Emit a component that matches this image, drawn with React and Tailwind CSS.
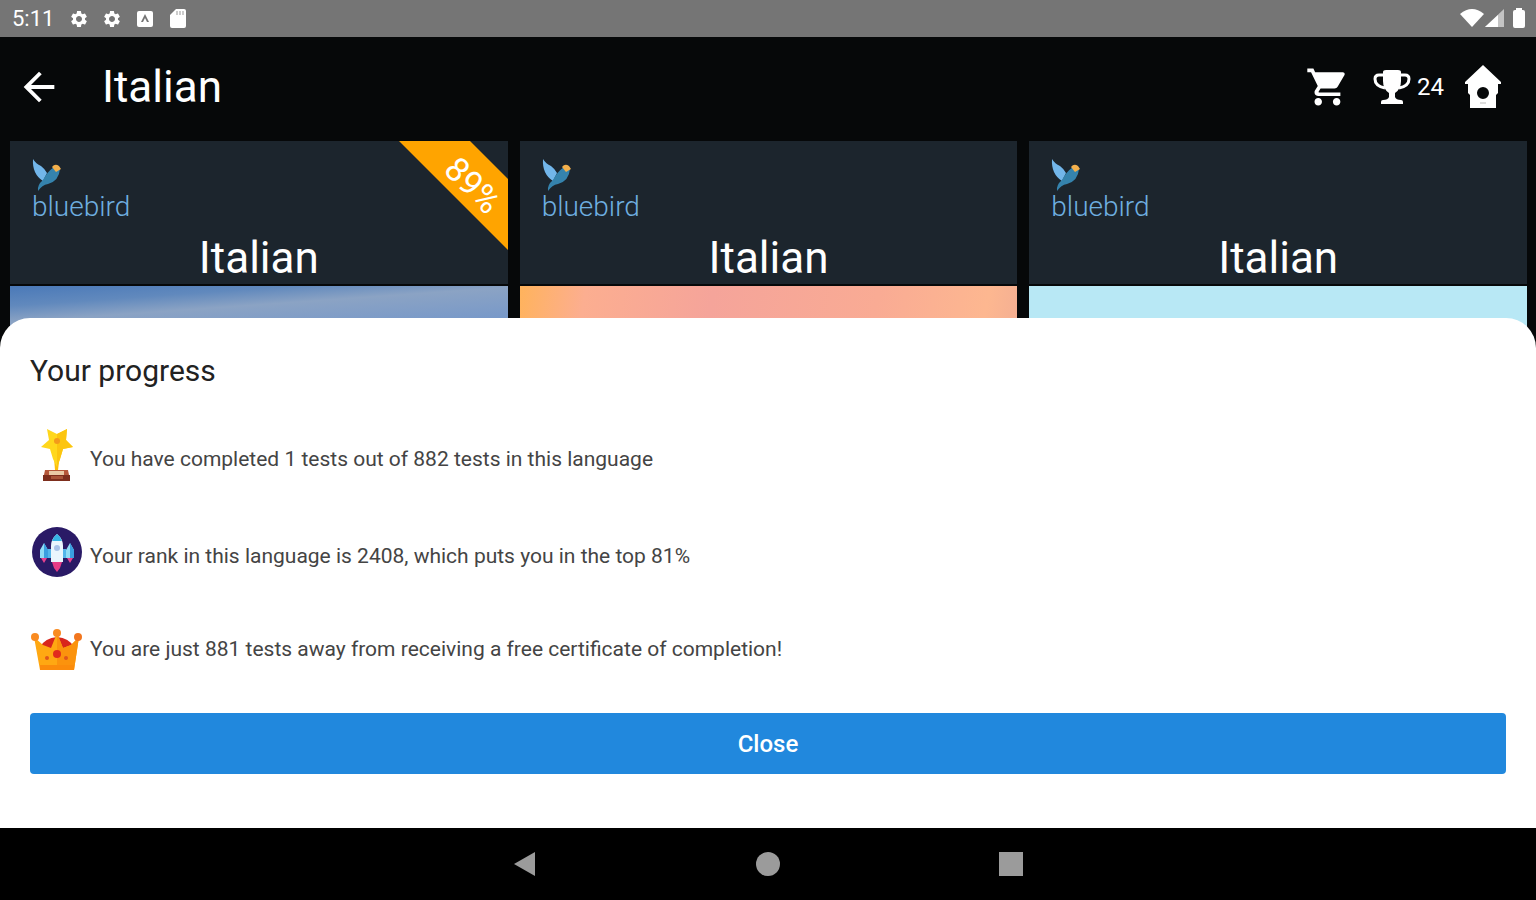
import { useState } from "react";
import { MdArrowBack, MdSettings } from "react-icons/md";
import { IoMdCart } from "react-icons/io";

const courses = [
  {
    id: "a1",
    title: "Italian",
    progress: "89%",
    cover: "bg-[linear-gradient(176deg,#4a79b8_0px,#6189bd_20px,#8ba3c4_36px,#6f94cb_80px)]",
  },
  {
    id: "a2",
    title: "Italian",
    cover: "bg-[linear-gradient(100deg,#ffb35c_0%,#fcae90_12%,#f5a49a_35%,#f9ab94_65%,#fdb790_85%,#e8a496_100%)]",
  },
  {
    id: "b1",
    title: "Italian",
    cover: "bg-[#b8e8f5]",
  },
];

const stats = [
  { icon: StarAward, text: "You have completed 1 tests out of 882 tests in this language" },
  { icon: RocketBadge, text: "Your rank in this language is 2408, which puts you in the top 81%" },
  { icon: Crown, text: "You are just 881 tests away from receiving a free certificate of completion!" },
];

function StarAward() {
  return (
    <svg viewBox="0 0 52 62" className="w-13 h-[62px] shrink-0" aria-hidden="true">
      <path d="M23 17h8l-3 24h-3z" fill="#fdbf0a" />
      <path d="M17 0l10 5L37 0l-1 11 7 7-10 2-3 10-3 8-4-8-3-10-9-2 8-7z" fill="#ffd71c" />
      <path d="M27 5L37 0l-1 11 7 7-10 2-3 10-3 8z" fill="#fcc50f" />
      <circle cx="27" cy="12" r="3" fill="#f39a1b" />
      <path d="M15 41h23l1 5H14z" fill="#b5573a" />
      <path d="M19 42h15v5H19z" fill="#e9c9a5" />
      <path d="M13 46h27v6H13z" fill="#7d2e1d" />
      <path d="M21 47h12v3H21z" fill="#a85338" />
    </svg>
  );
}

function RocketBadge() {
  return (
    <svg viewBox="0 0 52 62" className="w-13 h-[62px] shrink-0" aria-hidden="true">
      <circle cx="27" cy="26" r="25" fill="#2a1a66" />
      <path d="M10 24l4-7 4 7v8h-8zM36 24l4-7 4 7v8h-8z" fill="#8fdcf5" />
      <path d="M14 17l4 7v8h-4zM40 17l4 7v8h-4z" fill="#3a9fe0" />
      <path d="M11 32h6l-3 5zM37 32h6l-3 5z" fill="#e8418f" />
      <path d="M18 23h18v9H18z" fill="#53b6ea" />
      <path d="M21 20q0-7 6-12 6 5 6 12v16H21z" fill="#eaf6fd" />
      <path d="M22 15q1-4 5-7 4 3 5 7z" fill="#36b5e5" />
      <circle cx="27" cy="22" r="3" fill="#a9c3e8" />
      <path d="M22 36h10l-2 6-3 4-3-4z" fill="#e63b86" />
    </svg>
  );
}

function Crown() {
  return (
    <svg viewBox="0 0 52 53" className="w-13 h-[53px] shrink-0" aria-hidden="true">
      <path d="M10 24q5-9 17-10 12 1 17 10l-5 8H15z" fill="#d8261c" />
      <path d="M4 14l9 8 8 3 6-15 6 15 8-3 8-8-5 33H10z" fill="#ffa812" />
      <path d="M27 10l6 15 8-3 8-8-5 33H27z" fill="#fb930d" />
      <circle cx="5" cy="14" r="4" fill="#f98b21" />
      <circle cx="27" cy="10" r="4" fill="#f98b21" />
      <circle cx="48" cy="14" r="4" fill="#f2761e" />
      <path d="M10 42h34v5H10z" fill="#fb8b0b" />
      <circle cx="27" cy="31" r="4" fill="#e12c1d" />
      <circle cx="17" cy="35" r="2" fill="#e0561b" />
      <circle cx="36" cy="35" r="2" fill="#e0561b" />
    </svg>
  );
}

function BirdLogo() {
  return (
    <div className="w-fit">
      <svg viewBox="0 0 30 32" className="w-[30px] h-8" aria-hidden="true">
        <path d="M1 0q3 5 8 7 4 3 6 7l-4 8Q0 15 1 0z" fill="#72b6ea" />
        <path d="M28 10q-1 12-12 15-6 1-10 7-1-6 5-11 4-8 11-13z" fill="#3583ad" />
        <path d="M20 8q3-4 7-1l2 3-5 3z" fill="#f3b04c" />
      </svg>
      <p className="mt-[2px] text-[28px] leading-7 font-light text-[#6fafe0]">bluebird</p>
    </div>
  );
}

function Trophy() {
  return (
    <svg viewBox="0 0 38 36" className="w-[38px] h-9" aria-hidden="true">
      <path
        d="M10 6H6q-4 0-4 4 0 7 10 9M28 6h4q4 0 4 4 0 7-10 9"
        fill="none"
        stroke="#fff"
        strokeWidth="3"
      />
      <path
        d="M10 3q0-2 3-2h12q3 0 3 2v9q0 8-6 12v4q1 3 6 3 2 0 2 2v2H8v-2q0-2 2-2 5 0 6-3v-4q-6-4-6-12z"
        fill="#fff"
      />
    </svg>
  );
}

function Birdhouse() {
  return (
    <svg viewBox="0 0 38 44" className="w-[38px] h-11" aria-hidden="true">
      <path
        fillRule="evenodd"
        d="M19 0l18 17v2h-3v9l-2 2v13H6V30l-2-2v-9H1v-2zM19 22a6 6 0 1 0 0 12 6 6 0 0 0 0-12z"
        fill="#fff"
      />
      <path d="M16 38h6" stroke="#bbb" />
    </svg>
  );
}

function Ribbon({ label }) {
  return (
    <div className="absolute top-0 right-0 w-[109px] h-[109px] overflow-hidden">
      <svg viewBox="0 0 109 109" className="w-full h-full" aria-hidden="true">
        <path d="M0 0h71l38 38v71z" fill="#ffa400" />
      </svg>
      <span className="absolute top-6 right-0 w-[70px] text-center text-[34px] leading-10 text-white rotate-45">
        {label}
      </span>
    </div>
  );
}

function CourseCard({ course }) {
  return (
    <article className="relative">
      <div className="bg-[#1c252d] px-[22px] pt-[18px]">
        <BirdLogo />
        <h2 className="mt-[11px] text-[44px] leading-[52px] text-white text-center">{course.title}</h2>
      </div>
      <div className={`mt-[2px] h-80 ${course.cover}`} />
      {course.progress && <Ribbon label={course.progress} />}
    </article>
  );
}

function StatusBar() {
  return (
    <div className="flex items-center justify-between h-[37px] bg-[#757575] text-white pl-3 pr-[10px]">
      <div className="flex items-center gap-[13px]">
        <span className="text-[22px] mr-[2px]">5:11</span>
        <MdSettings size={20} />
        <MdSettings size={20} />
        <svg viewBox="0 0 20 20" className="w-5 h-5" aria-hidden="true">
          <path d="M4 2h12q2 0 2 2v12q0 2-2 2H4q-2 0-2-2V4q0-2 2-2z" fill="#fff" />
          <path d="M6 13l4-8 4 8h-2l-2-4-2 4z" fill="#757575" />
        </svg>
        <svg viewBox="0 0 20 20" className="w-5 h-5" aria-hidden="true">
          <path d="M8 0h8q2 0 2 2v15q0 2-2 2H4q-2 0-2-2V6z" fill="#fff" />
          <path d="M9 2v4M12 2v4M15 2v4" stroke="#999" />
        </svg>
      </div>
      <div className="flex items-center">
        <svg viewBox="0 0 24 20" className="w-6 h-5" aria-hidden="true">
          <path d="M0 5q12-10 24 0L12 18z" fill="#fff" />
        </svg>
        <svg viewBox="0 0 22 20" className="w-[22px] h-5" aria-hidden="true">
          <path d="M1 18L20 0v18z" fill="#c4c4c4" />
          <path d="M1 18L14 6v12z" fill="#fff" />
        </svg>
        <svg viewBox="0 0 14 22" className="ml-[6px] w-[14px] h-[22px]" aria-hidden="true">
          <path d="M4 0h6v2h1q2 0 2 2v14q0 2-2 2H3q-2 0-2-2V4q0-2 2-2h1z" fill="#fff" />
        </svg>
      </div>
    </div>
  );
}

function Header() {
  return (
    <header className="flex items-center justify-between h-[104px] pl-4 pr-[34px] pb-1 text-white">
      <div className="flex items-center gap-10">
        <button aria-label="Back">
          <MdArrowBack size={46} />
        </button>
        <h1 className="text-[44px] leading-[52px]">Italian</h1>
      </div>
      <div className="flex items-center">
        <button aria-label="Cart">
          <IoMdCart size={46} />
        </button>
        <button className="flex items-center gap-[6px] ml-6" aria-label="Trophies 24">
          <Trophy />
          <span className="text-2xl">24</span>
        </button>
        <button className="ml-5" aria-label="Home">
          <Birdhouse />
        </button>
      </div>
    </header>
  );
}

function ProgressSheet({ onClose }) {
  return (
    <section className="absolute inset-x-0 bottom-0 bg-white rounded-t-[30px] px-[30px] pt-8 pb-[54px]">
      <h2 className="text-[30px] leading-[42px] text-[#222]">Your progress</h2>
      <ul className="flex flex-col gap-[35px] mt-[37px]">
        {stats.map(({ icon: Icon, text }) => (
          <li key={text} className="flex items-center gap-2">
            <Icon />
            <p className="text-[21px] text-[#444]">{text}</p>
          </li>
        ))}
      </ul>
      <button
        onClick={onClose}
        className="mt-[37px] w-full h-[61px] rounded-sm bg-[#2188dd] text-white text-2xl font-medium"
      >
        Close
      </button>
    </section>
  );
}

function NavBar() {
  return (
    <nav className="flex justify-center h-[72px] bg-black text-[#9b9b9b]">
      <button className="flex items-center justify-center w-[243px]" aria-label="System back">
        <svg viewBox="0 0 24 24" className="w-6 h-6" aria-hidden="true">
          <path d="M1 12L22 0v24z" fill="currentColor" />
        </svg>
      </button>
      <button className="flex items-center justify-center w-[243px]" aria-label="System home">
        <span className="w-6 h-6 rounded-full bg-current" />
      </button>
      <button className="flex items-center justify-center w-[243px]" aria-label="Recent apps">
        <span className="w-6 h-6 bg-current" />
      </button>
    </nav>
  );
}

export default function App() {
  const [sheetOpen, setSheetOpen] = useState(true);

  return (
    <div className="flex flex-col min-h-screen bg-[#060809] font-[Roboto,sans-serif]">
      <StatusBar />
      <main className="relative flex-1">
        <Header />
        <div className="grid grid-cols-3 gap-3 pl-[10px] pr-[9px]">
          {courses.map((course) => (
            <CourseCard key={course.id} course={course} />
          ))}
        </div>
        {sheetOpen && <ProgressSheet onClose={() => setSheetOpen(false)} />}
      </main>
      <NavBar />
    </div>
  );
}
